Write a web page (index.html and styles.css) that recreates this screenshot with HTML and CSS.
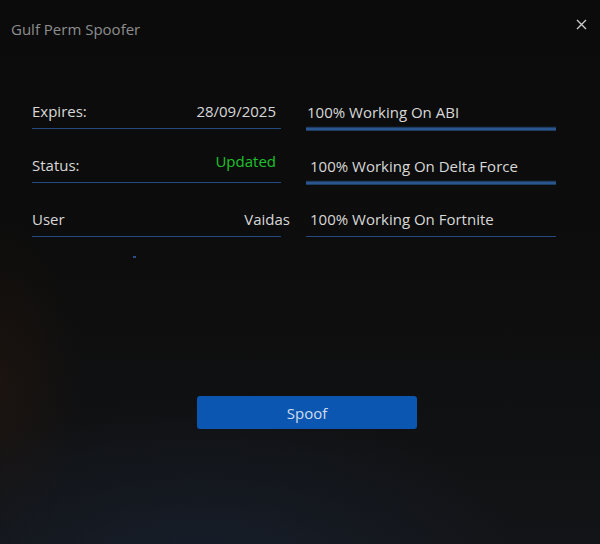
FILE: index.html
```html
<!DOCTYPE html>
<html lang="en">
<head>
  <meta charset="UTF-8" />
  <title>Gulf Perm Spoofer</title>
  <link rel="stylesheet" href="styles.css">
</head>
<body>
  <div class="window">
    <div class="titlebar">
      <span class="title">Gulf Perm Spoofer</span>
      <svg class="close" width="11" height="11" viewBox="0 0 11 11">
        <path d="M1 1 L10 10 M10 1 L1 10" stroke="#cfcfcf" stroke-width="1.3" fill="none" />
      </svg>
    </div>

    <div class="fields">
      <div class="column">
        <div class="field">
          <span class="label">Expires:</span>
          <span class="value">28/09/2025</span>
        </div>
        <div class="field">
          <span class="label">Status:</span>
          <span class="value ok">Updated</span>
        </div>
        <div class="field">
          <span class="label">User</span>
          <span class="value over">Vaidas</span>
        </div>
      </div>

      <div class="column">
        <div class="field glow first">
          <span class="label">100% Working On ABI</span>
        </div>
        <div class="field glow">
          <span class="label">100% Working On Delta Force</span>
        </div>
        <div class="field">
          <span class="label">100% Working On Fortnite</span>
        </div>
      </div>
    </div>

    <div class="marker"></div>

    <button class="spoof">Spoof</button>
  </div>
</body>
</html>
```

FILE: styles.css
```css
* {
  margin: 0;
  padding: 0;
  box-sizing: border-box;
}

body {
  width: 600px;
  height: 544px;
  overflow: hidden;
  font-family: "Open Sans", "Noto Sans", sans-serif;
  background-color: #0c0c0c;
  background-image:
    radial-gradient(ellipse 320px 170px at 200px 570px, rgba(30, 50, 80, 0.35), transparent),
    radial-gradient(ellipse 80px 160px at 0 380px, rgba(60, 30, 10, 0.25), transparent),
    linear-gradient(to bottom, #0b0b0b 0%, #0d0d0d 50%, #131417 100%);
}

.window {
  height: 100%;
}

/* 标题栏 */
.titlebar {
  display: flex;
  justify-content: space-between;
  align-items: center;
  padding: 16px 13px 0 11px;
  height: 40px;
}

.title {
  font-size: 15px;
  color: #8e8e8e;
  margin-top: 2px;
}

.close {
  display: block;
  margin-top: -8px;
}

.fields {
  display: grid;
  grid-template-columns: 249px 250px;
  column-gap: 25px;
  margin: 52px 0 0 32px;
}

.column {
  display: flex;
  flex-direction: column;
  gap: 17px;
}

.field {
  display: flex;
  justify-content: space-between;
  align-items: flex-end;
  height: 37px;
  padding-bottom: 6px;
  border-bottom: 1px solid #244a80;
  font-size: 15px;
  line-height: 22px;
  color: #d8d8d8;
}

.field .label {
  padding-left: 4px;
}

.column:first-child .field .label {
  padding-left: 0;
}

.field.first .label {
  padding-left: 1px;
}

/* 发光的下划线 */
.field.glow {
  border-bottom: none;
  height: 39px;
  margin-bottom: -2px;
  padding-bottom: 8px;
  background-image: linear-gradient(to top,
    rgba(35, 70, 120, 0.4) 0,
    #2a568f 1px,
    #2a568f 3px,
    rgba(35, 70, 120, 0.35) 4px,
    transparent 5px);
}

.value {
  margin-right: 5px;
}

.value.ok {
  color: #1fc12a;
  padding-bottom: 4px;
}

.value.over {
  margin-right: -9px;
}

.marker {
  width: 3px;
  height: 2px;
  margin: 19px 0 0 133px;
  background: #2a4f86;
}

.spoof {
  display: block;
  width: 220px;
  height: 33px;
  margin: 138px 0 0 197px;
  background-color: #0a56b0;
  border: none;
  border-radius: 3px;
  color: #cfdcee;
  font-family: inherit;
  font-size: 15px;
}
```
